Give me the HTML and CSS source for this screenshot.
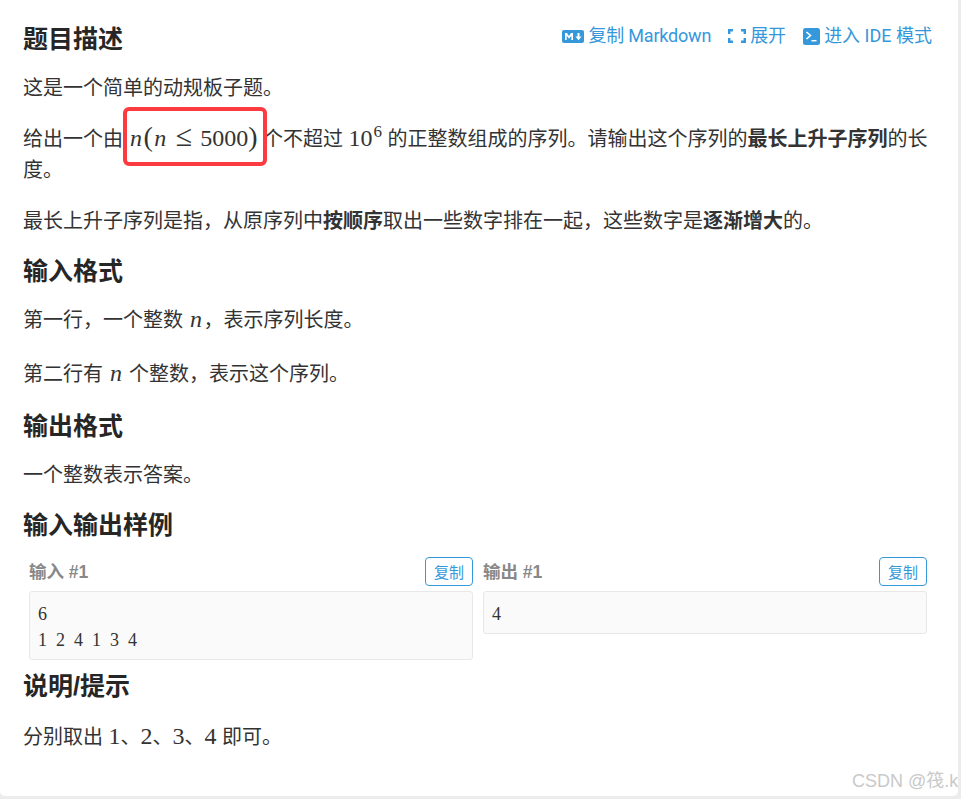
FILE: index.html
```html
<!DOCTYPE html>
<html lang="zh-CN">
<head>
<meta charset="utf-8">
<title>题目描述</title>
<link rel="stylesheet" href="styles.css">
</head>
<body>
<main class="card">
  <header class="top-row">
    <h2 class="heading">题目描述</h2>
    <nav class="actions">
      <a class="action action-tight">
        <svg class="ic ic-md" viewBox="0 0 22 13"><rect width="22" height="13" rx="2" fill="#3498db"/><path d="M3 10V3h2l2 3 2-3h2v7H9.300V5.700L7 8.700 4.700 5.700V10z" fill="#fff"/><path d="M15.500 3h2v3.500h2l-3 3.800-3-3.800h2z" fill="#fff"/></svg>
        <span>复制 Markdown</span>
      </a>
      <a class="action">
        <svg class="ic ic-exp" viewBox="0 0 18 14"><path d="M5 1.200H1.200V5M13 1.200h3.800V5M5 12.800H1.200V9M13 12.800h3.800V9" fill="none" stroke="#3498db" stroke-width="2.400"/></svg>
        <span>展开</span>
      </a>
      <a class="action">
        <svg class="ic ic-ide" viewBox="0 0 17 17"><rect width="17" height="17" rx="2.500" fill="#3498db"/><path d="M3.500 4l4 3.500-4 3.500" fill="none" stroke="#fff" stroke-width="1.600"/><path d="M8.500 12.700h5" stroke="#fff" stroke-width="1.500"/></svg>
        <span>进入 IDE 模式</span>
      </a>
    </nav>
  </header>

  <p class="para">这是一个简单的动规板子题。</p>
  <p class="para">给出一个由 <span class="math"><i>n</i><span class="paren">(</span><i>n</i><span class="rel">≤</span>5000<span class="paren">)</span></span> 个不超过 <span class="math">10<sup>6</sup></span> 的正整数组成的序列。请输出这个序列的<b>最长上升子序列</b>的长度。</p>
  <p class="para">最长上升子序列是指，从原序列中<b>按顺序</b>取出一些数字排在一起，这些数字是<b>逐渐增大</b>的。</p>

  <h2 class="heading section-input">输入格式</h2>
  <p class="para">第一行，一个整数 <span class="math"><i>n</i></span>，表示序列长度。</p>
  <p class="para para-loose">第二行有 <span class="math"><i>n</i></span> 个整数，表示这个序列。</p>

  <h2 class="heading section-output">输出格式</h2>
  <p class="para">一个整数表示答案。</p>

  <h2 class="heading section-samples">输入输出样例</h2>
  <section class="samples">
    <div class="sample">
      <div class="sample-head"><span class="sample-title">输入 #1</span><button class="copy">复制</button></div>
      <pre class="code">6
1 2 4 1 3 4</pre>
    </div>
    <div class="sample">
      <div class="sample-head"><span class="sample-title">输出 #1</span><button class="copy">复制</button></div>
      <pre class="code">4</pre>
    </div>
  </section>

  <h2 class="heading section-hint">说明/提示</h2>
  <p class="para">分别取出 <span class="math">1</span>、<span class="math">2</span>、<span class="math">3</span>、<span class="math">4</span> 即可。</p>
</main>
<div class="mark"></div>
<div class="watermark">CSDN @筏.k</div>
</body>
</html>
```
FILE: styles.css
```css
html, body {
  margin: 0;
  padding: 0;
}
body {
  width: 961px;
  height: 799px;
  overflow: hidden;
  position: relative;
  background: #ececec;
  font-family: "Liberation Sans", "Noto Sans CJK SC", sans-serif;
  color: #333;
}
.card {
  box-sizing: border-box;
  width: 958px;
  height: 796px;
  padding: 21px 26px 0 23px;
  background: #fff;
  border-radius: 0 0 5px 5px;
}
.top-row {
  display: flex;
  justify-content: space-between;
  align-items: flex-start;
  height: 50px;
}
.heading {
  margin: 0;
  font-size: 25px;
  line-height: 36px;
  font-weight: 700;
  color: #262626;
}
.section-input {
  margin-top: 18px;
  margin-bottom: 14px;
}
.section-output {
  margin-top: 20px;
  margin-bottom: 14px;
}
.section-samples {
  margin-top: 18px;
  margin-bottom: 13px;
}
.section-hint {
  margin-top: 8px;
  margin-bottom: 16px;
}
.actions {
  display: flex;
  gap: 17px;
  font-family: Roboto, "Noto Sans CJK SC", sans-serif;
  font-size: 18px;
  line-height: 30px;
  color: #3498db;
}
.action {
  display: flex;
  align-items: center;
  gap: 4px;
}
.action-tight {
  letter-spacing: -0.200px;
}
.ic {
  display: block;
  flex: none;
}
.ic-md { width: 22px; height: 13px; }
.ic-exp { width: 18px; height: 14px; }
.ic-ide { width: 17px; height: 17px; }
.para {
  margin: 0;
  font-size: 20px;
  line-height: 31px;
  word-spacing: 1px;
  font-family: "Noto Sans CJK SC", sans-serif;
}
.para + .para {
  margin-top: 20px;
}
.para + .para-loose {
  margin-top: 23px;
}
.para b {
  font-weight: 700;
}
.math {
  font-family: "Liberation Serif", serif;
  font-size: 24px;
  line-height: 0;
}
.math i {
  padding: 0 1.500px;
}
.paren {
  font-size: 28px;
  line-height: 0;
}
.math sup {
  font-size: 17px;
  line-height: 0;
  margin-left: 1px;
  vertical-align: 9px;
}
.rel {
  margin: 0 8px;
  font-size: 30px;
  line-height: 0;
}
.samples {
  display: grid;
  grid-template-columns: 444px 444px;
  column-gap: 10px;
  align-items: start;
  margin-left: 6px;
}
.sample-head {
  display: flex;
  justify-content: space-between;
  align-items: center;
  height: 30px;
  margin-bottom: 5px;
}
.sample-title {
  margin-top: -2px;
  font-size: 17.500px;
  font-weight: 700;
  color: #888;
}
.copy {
  box-sizing: border-box;
  width: 48px;
  height: 29px;
  padding: 0;
  border: 1px solid #3498db;
  border-radius: 4px;
  background: #fff;
  color: #3498db;
  font-family: "Noto Sans CJK SC", sans-serif;
  font-size: 15px;
  line-height: 27px;
}
.code {
  margin: 0;
  padding: 9px 8px 6px;
  border: 1px solid #e8e8e8;
  border-radius: 3px;
  background: #fafafa;
  font-family: "Liberation Serif", serif;
  font-size: 18px;
  line-height: 26px;
  word-spacing: 4.500px;
  color: #333;
}
.mark {
  position: absolute;
  left: 123px;
  top: 107px;
  box-sizing: border-box;
  width: 144px;
  height: 59px;
  border: 4px solid #fb3b3f;
  border-radius: 6px;
}
.watermark {
  position: absolute;
  left: 852px;
  top: 768px;
  width: 106px;
  overflow: hidden;
  white-space: nowrap;
  font-family: "Liberation Sans", "Noto Sans CJK SC", sans-serif;
  font-size: 18px;
  line-height: 26px;
  color: #c9c9c9;
}
```
